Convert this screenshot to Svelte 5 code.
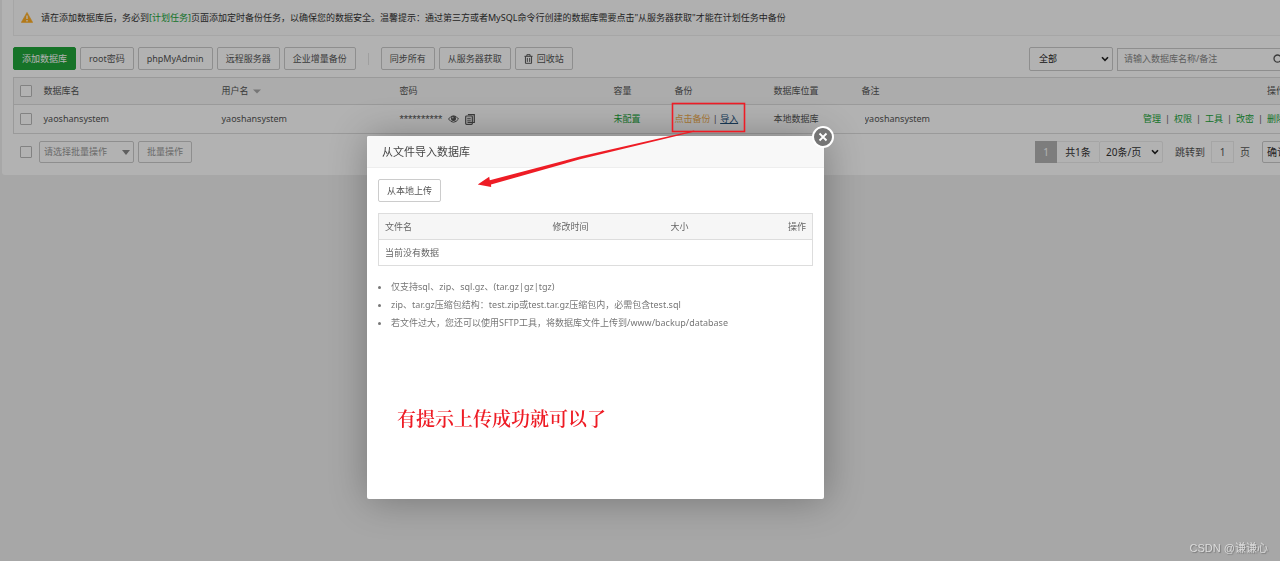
<script lang="ts">
	const columns: string[] = ['数据库名', '用户名', '密码', '容量', '备份', '数据库位置', '备注'];
	const actions: string[] = ['管理', '权限', '工具', '改密', '删除'];
	const tips: string[] = [
		'仅支持sql、zip、sql.gz、(tar.gz|gz|tgz)',
		'zip、tar.gz压缩包结构：test.zip或test.tar.gz压缩包内，必需包含test.sql',
		'若文件过大，您还可以使用SFTP工具，将数据库文件上传到/www/backup/database'
	];

	let isImportOpen = $state(true);
	let remark = $state('yaoshansystem');
	let pageNumber = $state('1');

	function openImport(event: MouseEvent): void {
		event.preventDefault();
		isImportOpen = true;
	}
</script>

{#snippet chevron()}
	<svg class="select-icon" width="8" height="8" viewBox="0 0 8 8" aria-hidden="true">
		<path d="M1 2.2 4 5.4 7 2.2" fill="none" stroke="#222" stroke-width="1.6" />
	</svg>
{/snippet}

<div class="page">
	<main class="panel">
		<div class="notice">
			<svg width="12" height="11" viewBox="0 0 12 11" aria-hidden="true">
				<path d="M6 .4 11.7 10.4H.3Z" fill="#ffae24" stroke="#ffae24" stroke-width=".6" stroke-linejoin="round" />
				<path d="M6 3.6v3.4M6 8v1.4" stroke="#fff" stroke-width="1.3" />
			</svg>
			<p>
				请在添加数据库后，务必到<a href="#crontab">[计划任务]</a>页面添加定时备份任务，以确保您的数据安全。温馨提示：通过第三方或者MySQL命令行创建的数据库需要点击"从服务器获取"才能在计划任务中备份
			</p>
		</div>

		<div class="toolbar">
			<div class="group">
				<button class="btn primary">添加数据库</button>
				<button class="btn">root密码</button>
				<button class="btn">phpMyAdmin</button>
				<button class="btn">远程服务器</button>
				<button class="btn">企业增量备份</button>
				<span class="divider"></span>
				<button class="btn">同步所有</button>
				<button class="btn">从服务器获取</button>
				<button class="btn">
					<svg width="9" height="10" viewBox="0 0 10 11" fill="none" stroke="#444" aria-hidden="true">
						<path d="M.5 2.5h9M3.2 2.3V.7h3.6v1.6M1.6 2.6v7.7h6.8V2.6M3.7 4.3v4.4M6.3 4.3v4.4" />
					</svg>
					回收站
				</button>
			</div>
			<div class="group">
				<div class="select-wrap type">
					<select aria-label="数据库类型">
						<option>全部</option>
					</select>
					{@render chevron()}
				</div>
				<div class="search">
					<input type="text" placeholder="请输入数据库名称/备注" aria-label="搜索数据库" />
					<svg width="11" height="11" viewBox="0 0 11 11" fill="none" stroke="#555" stroke-width="1.3" aria-hidden="true">
						<circle cx="4.6" cy="4.6" r="3.6" />
						<path d="m7.3 7.3 3 3" />
					</svg>
				</div>
			</div>
		</div>

		<table class="databases">
			<colgroup>
				<col class="c-check" />
				<col class="c-name" />
				<col class="c-name" />
				<col class="c-password" />
				<col class="c-size" />
				<col class="c-backup" />
				<col class="c-location" />
				<col />
				<col class="c-actions" />
			</colgroup>
			<thead>
				<tr>
					<th><input type="checkbox" aria-label="全选" /></th>
					{#each columns as column (column)}
						<th>
							{column}
							{#if column === '用户名'}
								<svg class="sort" width="8" height="5" viewBox="0 0 8 5" aria-hidden="true">
									<path d="M0 .5h8L4 4.5Z" fill="#aaa" />
								</svg>
							{/if}
						</th>
					{/each}
					<th class="right">操作</th>
				</tr>
			</thead>
			<tbody>
				<tr>
					<td><input type="checkbox" aria-label="选择 yaoshansystem" /></td>
					<td>yaoshansystem</td>
					<td>yaoshansystem</td>
					<td>
						<div class="password">
							<span class="stars">**********</span>
							<button class="icon" aria-label="显示密码">
								<svg width="11" height="8" viewBox="0 0 11 8">
									<path d="M.5 4Q2.8.8 5.5.8T10.5 4Q8.2 7.2 5.5 7.2T.5 4Z" fill="none" stroke="#555" />
									<circle cx="5.5" cy="3.6" r="2.5" fill="#555" />
									<circle cx="4.8" cy="2.8" r=".8" fill="#ddd" />
								</svg>
							</button>
							<button class="icon" aria-label="复制密码">
								<svg width="10" height="11" viewBox="0 0 10 11" fill="none" stroke="#555">
									<path d="M2.9.7h6.4v7.8H2.9" stroke-width="1.2" />
									<rect x=".7" y="2" width="6.6" height="8.3" rx=".8" stroke-width="1.2" />
									<path d="M2.2 4.3h3.6M2.2 6.2h3.6M2.2 8.1h3.6" />
								</svg>
							</button>
						</div>
					</td>
					<td><a href="#quota">未配置</a></td>
					<td>
						<a class="orange" href="#backup">点击备份</a> | <a class="import" href="#import" onclick={openImport}>导入</a>
					</td>
					<td>本地数据库</td>
					<td><input class="remark" type="text" aria-label="备注" bind:value={remark} /></td>
					<td class="right">
						<div class="actions">
							{#each actions as action, i (action)}
								{#if i > 0}<span>|</span>{/if}
								<a href="#{action}">{action}</a>
							{/each}
						</div>
					</td>
				</tr>
			</tbody>
		</table>

		<div class="footer">
			<div class="group">
				<input type="checkbox" aria-label="全选" />
				<div class="select-wrap batch">
					<select aria-label="批量操作">
						<option>请选择批量操作</option>
					</select>
					<svg class="select-icon" width="8" height="5" viewBox="0 0 8 5" aria-hidden="true">
						<path d="M0 0h8L4 5Z" fill="#888" />
					</svg>
				</div>
				<button class="btn" disabled>批量操作</button>
			</div>
			<div class="pager">
				<span class="current">1</span>
				<span class="total">共1条</span>
				<div class="select-wrap size">
					<select aria-label="每页条数">
						<option>20条/页</option>
					</select>
					{@render chevron()}
				</div>
				<label for="page-number">跳转到</label>
				<input id="page-number" type="text" bind:value={pageNumber} />
				<span>页</span>
				<button class="btn confirm">确认</button>
			</div>
		</div>
	</main>
</div>

{#if isImportOpen}
	<div class="shade"></div>
	<div class="dialog" role="dialog" aria-labelledby="dialog-title">
		<button class="close" aria-label="关闭" onclick={() => (isImportOpen = false)}>
			<svg width="10" height="10" viewBox="0 0 10 10">
				<path d="m1.5 1.5 7 7m0-7-7 7" stroke="#fff" stroke-width="1.9" />
			</svg>
		</button>
		<h2 id="dialog-title">从文件导入数据库</h2>
		<div class="dialog-body">
			<button class="btn">从本地上传</button>
			<table class="files">
				<colgroup>
					<col class="f-name" />
					<col class="f-time" />
					<col />
					<col />
				</colgroup>
				<thead>
					<tr>
						<th>文件名</th>
						<th>修改时间</th>
						<th>大小</th>
						<th class="right">操作</th>
					</tr>
				</thead>
				<tbody>
					<tr><td colspan="4">当前没有数据</td></tr>
				</tbody>
			</table>
			<ul>
				{#each tips as tip (tip)}
					<li>{tip}</li>
				{/each}
			</ul>
			<p class="hint">有提示上传成功就可以了</p>
		</div>
	</div>

	<!-- Marker box round the import link, with an arrow into the dialog -->
	<svg class="marker" width="280" height="90" viewBox="470 100 280 90" aria-hidden="true">
		<rect x="672.5" y="103.5" width="72" height="28" fill="none" stroke="#ee1c25" stroke-width="1.6" />
		<path d="M477.7 184.4 489.2 176.7 489.8 180.2 580 156.6 694 130.6 695 131.6 580 159.2 491 184.4 491.2 187Z" fill="#ee1c25" />
	</svg>
{/if}

<span class="watermark">CSDN @谦谦心</span>

<style>
	:global(body) {
		margin: 0;
		background: #f0f0f0;
		color: #555;
		font: 9px/18px 'Noto Sans', 'Noto Sans CJK SC', sans-serif;
	}

	.page {
		min-height: 100vh;
		overflow: hidden;
	}

	/* The list is wider than the window and runs off its right side */
	.panel {
		margin: 0 -23px 0 2px;
		padding: 0 11px 12px;
		background: #fff;
		border-radius: 0 0 3px 3px;
	}

	button,
	input,
	select {
		box-sizing: border-box;
		margin: 0;
		font: inherit;
		color: inherit;
	}

	a {
		color: #20a53a;
		text-decoration: none;
	}

	p {
		margin: 0;
	}

	.notice {
		display: flex;
		align-items: center;
		gap: 8px;
		height: 35px;
		padding-left: 7px;
		border: 1px solid #eee;
		border-top: 0;
		background: #fcfcfc;
		color: #333;
		white-space: nowrap;
	}

	.toolbar,
	.footer {
		display: flex;
		align-items: center;
		justify-content: space-between;
	}

	.toolbar {
		align-items: flex-start;
		padding: 11px 0 6px;
	}

	.group {
		display: flex;
		align-items: center;
		gap: 4px;
	}

	.btn {
		display: inline-flex;
		align-items: center;
		justify-content: center;
		gap: 4px;
		height: 23px;
		padding: 0 8px;
		border: 1px solid #ccc;
		border-radius: 2px;
		background: #fff;
		white-space: nowrap;
		cursor: pointer;
	}

	.btn:disabled {
		color: #999;
		cursor: default;
	}

	.primary {
		border-color: #20a53a;
		background: #20a53a;
		color: #fff;
	}

	.divider {
		width: 1px;
		height: 12px;
		margin: 0 8px;
		background: #e4e4e4;
	}

	/* The select and its arrow share one grid cell */
	.select-wrap {
		display: grid;
		align-items: center;
	}

	.select-wrap > :global(*) {
		grid-area: 1 / 1;
	}

	.select-wrap select {
		width: 100%;
		height: 22px;
		padding: 0 4px;
		border: 1px solid #ccc;
		border-radius: 2px;
		background: #fff;
		appearance: none;
	}

	.select-icon {
		justify-self: end;
		margin-right: 4px;
		pointer-events: none;
	}

	.type {
		width: 84px;
	}

	.type select {
		height: 24px;
		padding-left: 9px;
		color: #222;
	}

	.search {
		display: flex;
		align-items: center;
		box-sizing: border-box;
		width: 175px;
		height: 23px;
		padding: 0 7px 0 6px;
		border: 1px solid #ccc;
	}

	.search input {
		flex: 1;
		min-width: 0;
		padding: 0;
		border: 0;
		background: none;
	}

	.search input::placeholder {
		color: #888;
	}

	table {
		width: 100%;
		border: 1px solid #ddd;
		border-collapse: collapse;
		table-layout: fixed;
	}

	th,
	td {
		padding: 0 6px;
		font-weight: normal;
		text-align: left;
		white-space: nowrap;
	}

	th {
		height: 26px;
		border-bottom: 1px solid #ddd;
		background: #f6f6f6;
	}

	.databases td {
		height: 28px;
	}

	.c-check {
		width: 24px;
	}

	.c-name {
		width: 178px;
	}

	.c-password {
		width: 214px;
	}

	.c-size {
		width: 61px;
	}

	.c-backup {
		width: 99px;
	}

	.c-location {
		width: 88px;
	}

	.c-actions {
		width: 180px;
	}

	.right {
		text-align: right;
	}

	input[type='checkbox'] {
		display: block;
		width: 12px;
		height: 12px;
		border: 1px solid #bbb;
		border-radius: 1px;
		background: #fff;
		appearance: none;
	}

	.sort {
		margin-left: 2px;
		vertical-align: middle;
	}

	.password {
		display: flex;
		align-items: center;
		gap: 6px;
	}

	.stars {
		font-family: 'Liberation Sans', Arial, sans-serif;
		font-size: 11px;
	}

	.icon {
		display: flex;
		padding: 0;
		border: 0;
		background: none;
		cursor: pointer;
	}

	.orange {
		color: #f0ad4e;
	}

	.import {
		color: #23527c;
		text-decoration: underline;
	}

	.remark {
		width: 120px;
		padding: 0 3px;
		border: 0;
		background: none;
	}

	.actions {
		display: flex;
		justify-content: flex-end;
		gap: 4px;
	}

	.footer {
		padding-top: 7px;
	}

	.footer .group {
		padding-left: 7px;
	}

	.footer .btn {
		height: 22px;
	}

	.batch {
		width: 95px;
		margin-left: 3px;
		color: #999;
	}

	.pager {
		display: flex;
		align-items: center;
		font-size: 10px;
	}

	.current,
	.total,
	.pager input {
		box-sizing: border-box;
		height: 22px;
		border: 1px solid #ececec;
		line-height: 20px;
		text-align: center;
	}

	.current {
		width: 22px;
		border-color: #b4b4b4;
		background: #b4b4b4;
		color: #fff;
	}

	.total {
		width: 42px;
		border-width: 1px 0;
		color: #333;
	}

	.size {
		width: 64px;
		margin-right: 12px;
		color: #333;
	}

	.size select {
		padding-left: 6px;
		border-color: #ececec;
	}

	.pager input {
		width: 23px;
		margin: 0 6px;
		padding: 0;
	}

	.pager .confirm {
		margin-left: 12px;
		padding: 0 4px;
		color: #333;
	}

	.shade {
		position: fixed;
		inset: 0;
		background: rgba(0, 0, 0, 0.3);
	}

	.dialog {
		position: absolute;
		top: 136px;
		left: 367px;
		width: 457px;
		min-height: 363px;
		border-radius: 2px;
		background: #fff;
		box-shadow: 1px 1px 38px rgba(0, 0, 0, 0.3);
	}

	.dialog h2 {
		margin: 0;
		padding: 0 15px;
		border-bottom: 1px solid #eee;
		border-radius: 2px 2px 0 0;
		background: #f8f8f8;
		color: #444;
		font-size: 11px;
		font-weight: normal;
		line-height: 31px;
	}

	.dialog-body {
		padding: 11px;
	}

	.close {
		position: absolute;
		top: -10px;
		right: -10px;
		display: flex;
		align-items: center;
		justify-content: center;
		width: 22px;
		height: 22px;
		padding: 0;
		border: 2px solid #fff;
		border-radius: 50%;
		background: #757575;
		cursor: pointer;
	}

	.files {
		margin-top: 11px;
		color: #666;
	}

	.files th,
	.files td {
		height: 25px;
	}

	.f-name {
		width: 168px;
	}

	.f-time {
		width: 118px;
	}

	ul {
		margin: 12px 0 0;
		padding-left: 13px;
		color: #777;
	}

	.hint {
		margin-top: 72px;
		padding-left: 19px;
		color: #ee1c25;
		font: 600 19px/28px 'Noto Serif CJK SC', 'Noto Sans CJK SC', serif;
	}

	.marker {
		position: absolute;
		top: 100px;
		left: 470px;
		pointer-events: none;
	}

	.watermark {
		position: fixed;
		right: 12px;
		bottom: 4px;
		color: #dcdcdc;
		font: 11px/18px 'Liberation Sans', 'Noto Sans CJK SC', sans-serif;
		text-shadow: 1px 1px 1px #777;
	}
</style>
